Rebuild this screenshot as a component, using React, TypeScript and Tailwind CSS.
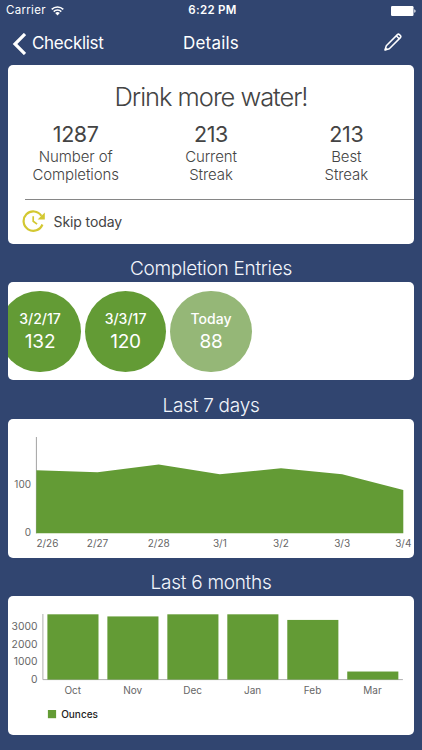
import type { ReactNode } from "react";

interface Entry {
  label: string;
  value: number;
  faded?: boolean;
}

const stats = [
  { value: 1287, lines: ["Number of", "Completions"] },
  { value: 213, lines: ["Current", "Streak"] },
  { value: 213, lines: ["Best", "Streak"] },
];

const entries: Entry[] = [
  { label: "3/2/17", value: 132 },
  { label: "3/3/17", value: 120 },
  { label: "Today", value: 88, faded: true },
];

const days = [
  { label: "2/26", value: 128 },
  { label: "2/27", value: 124 },
  { label: "2/28", value: 140 },
  { label: "3/1", value: 120 },
  { label: "3/2", value: 132 },
  { label: "3/3", value: 120 },
  { label: "3/4", value: 88 },
];

const months = [
  { label: "Oct", value: 3720 },
  { label: "Nov", value: 3600 },
  { label: "Dec", value: 3720 },
  { label: "Jan", value: 3720 },
  { label: "Feb", value: 3400 },
  { label: "Mar", value: 460 },
];

function Card({ className, children }: { className: string; children: ReactNode }) {
  return <section className={`mx-2 shrink-0 overflow-hidden rounded-[5px] bg-white ${className}`}>{children}</section>;
}

function SectionTitle({ children }: { children: ReactNode }) {
  return (
    <h2 className="flex h-[38.3px] shrink-0 items-end justify-center pb-px text-[19px] leading-[25px] font-light tracking-[-0.27px] text-[#f3f6fc]">
      {children}
    </h2>
  );
}

function StatusBar() {
  return (
    <div className="grid h-[22px] shrink-0 grid-cols-3 items-center px-[6px] text-[11.5px] text-white">
      <div className="flex items-center gap-[5px]">
        <span className="tracking-[0.3px]">Carrier</span>
        <svg width="13" height="10" viewBox="0 0 13 10" fill="none" stroke="currentColor" strokeWidth="1.5">
          <path d="M0.7 3.4a8.2 8.2 0 0 1 11.6 0" />
          <path d="M2.7 5.6a5.4 5.4 0 0 1 7.6 0" />
          <path d="M6.5 9.4 4.2 7.1a3.3 3.3 0 0 1 4.6 0Z" fill="currentColor" stroke="none" />
        </svg>
      </div>
      <span className="pl-[3px] text-center font-semibold tracking-[0.3px]">6:22 PM</span>
      <svg className="justify-self-end" width="25" height="10" viewBox="0 0 25 10" fill="currentColor">
        <rect width="22.5" height="10" rx="1.2" />
        <path d="M23.3 3.2c1.7.5 1.7 3.1 0 3.6Z" />
      </svg>
    </div>
  );
}

function NavBar() {
  return (
    <header className="grid h-[43px] shrink-0 grid-cols-3 items-center px-[12px] text-[17px] text-white">
      <button className="flex items-center gap-[6px]">
        <svg width="14" height="22" viewBox="0 0 14 22" fill="none" stroke="currentColor" strokeWidth="3.2">
          <path d="M13 1 3 11l10 10" />
        </svg>
        <span className="tracking-[-0.3px]">Checklist</span>
      </button>
      <h1 className="text-center tracking-[0.2px]">Details</h1>
      <button className="mr-[8px] mb-[3px] justify-self-end">
        <svg width="18" height="18" viewBox="0 0 18 18" fill="none" stroke="currentColor" strokeWidth="1.5" strokeLinejoin="round">
          <path d="M1 17 2.3 12.7 13.4 1.6q1-1 2 0l1 1q1 1 0 2L5.3 15.7Z" />
          <path d="m12.2 2.8 3 3" />
          <path d="M1 17 1.7 14.6 3.4 16.3Z" fill="currentColor" strokeWidth="0.5" />
        </svg>
      </button>
    </header>
  );
}

function WeekChart() {
  const x = (i: number) => 28.4 + i * 61.15;
  const y = (v: number) => 114 - v * 0.49;
  const line = days.map((d, i) => `${x(i)},${y(d.value)}`).join(" ");

  return (
    <svg width="406" height="139" viewBox="0 0 406 139" className="block text-[10px]" fill="#666">
      <path d="M28.4 18v96.3" stroke="#8a8a8a" strokeWidth="0.8" />
      <polygon points={`28.2,114.3 ${line} ${x(6)},114.3`} fill="#639b35" />
      <text x="23" y="68.5" textAnchor="end">100</text>
      <text x="23" y="117.3" textAnchor="end">0</text>
      {days.map((d, i) => (
        <text key={d.label} x={i === 0 ? 39.4 : x(i)} y="128.4" textAnchor="middle">
          {d.label}
        </text>
      ))}
    </svg>
  );
}

function MonthChart() {
  return (
    <svg width="406" height="139" viewBox="0 0 406 139" className="block text-[10px]" fill="#666">
      <path d="M34.9 18v65.6h360" stroke="#a5a5a5" strokeWidth="0.9" fill="none" />
      {[0, 1000, 2000, 3000].map((tick) => (
        <text key={tick} x="29.4" y={86.6 - tick * 0.0175} textAnchor="end" className="text-[10.3px]">
          {tick}
        </text>
      ))}
      {months.map((m, i) => {
        const height = m.value * 0.01755;
        return (
          <g key={m.label}>
            <rect x={39.4 + i * 59.97} y={83.6 - height} width="51.1" height={height} fill="#639b35" />
            <text x={64.7 + i * 59.97} y="97.8" textAnchor="middle">
              {m.label}
            </text>
          </g>
        );
      })}
      <rect x="39.9" y="114" width="8.2" height="8.2" fill="#639b35" />
      <text x="53.2" y="122" fill="#222" fontWeight="500">Ounces</text>
    </svg>
  );
}

export default function App() {
  return (
    <main className="flex h-[750px] w-[422px] flex-col overflow-hidden bg-[#314570] font-['Inter',sans-serif]">
      <StatusBar />
      <NavBar />

      <Card className="h-[179px] text-[#444]">
        <h2 className="pt-[15px] text-center text-[25.5px] leading-[34px] font-light tracking-[-1.05px]">
          Drink more water!
        </h2>
        <div className="grid grid-cols-3 pt-[6px] text-center">
          {stats.map((s) => (
            <div key={s.lines[0]}>
              <div className="text-[21.5px] leading-[28px] tracking-[-0.4px]">{s.value}</div>
              {s.lines.map((l) => (
                <div key={l} className="text-[15px] leading-[18px] font-light tracking-[-0.1px]">{l}</div>
              ))}
            </div>
          ))}
        </div>
        <div className="mt-[15px] ml-[17px] h-px bg-[#868686]" />
        <div className="flex h-[43px] items-center gap-[9px] pl-[13.5px] text-[14px]">
          <svg width="23" height="23" viewBox="0 0 23 23" fill="none" stroke="#d3c832" strokeWidth="2.2">
            <path d="M19.4 5.8A9.7 9.7 0 1 0 20.4 14.5" />
            <path d="M11.2 6.2v5l3.9 2.9" strokeWidth="1.7" />
            <path d="M22.8 2.6v7h-7.2Z" fill="#d3c832" stroke="none" />
          </svg>
          <span className="tracking-[-0.1px]">Skip today</span>
        </div>
      </Card>

      <SectionTitle>Completion Entries</SectionTitle>
      <Card className="h-[98px]">
        <div className="-ml-[8.6px] flex gap-[4.2px] pt-[8.5px]">
          {entries.map((e) => (
            <div
              key={e.label}
              className={`flex size-[81.3px] shrink-0 flex-col items-center rounded-full pt-[18px] text-white ${e.faded ? "bg-[#95b777]" : "bg-[#639b35]"}`}
            >
              <span className="text-[14px] leading-5 font-medium">{e.label}</span>
              <span className="text-[19px] leading-[25px] tracking-[-0.2px]">{e.value}</span>
            </div>
          ))}
        </div>
      </Card>

      <SectionTitle>Last 7 days</SectionTitle>
      <Card className="h-[139px]">
        <WeekChart />
      </Card>

      <SectionTitle>Last 6 months</SectionTitle>
      <Card className="h-[139px]">
        <MonthChart />
      </Card>
    </main>
  );
}
